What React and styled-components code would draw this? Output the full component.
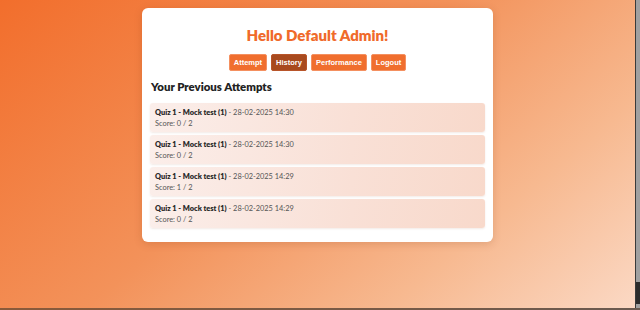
import React from "react";
import styled, { createGlobalStyle } from "styled-components";

const Global = createGlobalStyle`
  html, body { margin: 0; padding: 0; height: 100%; }
  body { font-family: "Lato", "Noto Sans", sans-serif; }
  #root { height: 100%; }
`;

const Page = styled.div`
  display: flex;
  flex-direction: column;
  height: 310px;
`;

const Viewport = styled.div`
  flex: 1;
  display: flex;
  background: linear-gradient(140deg, #f26e2c 0%, #f3925a 45%, #f7b990 75%, #fbd9c5 100%);
`;

const BottomEdge = styled.div`
  height: 2px;
  background: linear-gradient(90deg, #8a5a3a, #6a5a50);
`;

const Main = styled.main`
  flex: 1;
  display: flex;
  justify-content: center;
  align-items: flex-start;
  padding-top: 8px;
`;

const ScrollTrack = styled.div`
  width: 4px;
  border-left: 1px solid #3a3a3a;
  background: #a0a0a0;
  display: flex;
  flex-direction: column;
  justify-content: flex-end;
`;

const ScrollThumbEnd = styled.div`
  height: 22px;
  margin-bottom: 4px;
  background: #2c2c2c;
`;

const Card = styled.section`
  width: 351px;
  box-sizing: border-box;
  background: #fff;
  border-radius: 6px;
  padding: 18px 8px 14px;
  box-shadow: 0 2px 8px rgba(120, 50, 10, 0.18);
`;

const Title = styled.h1`
  margin: 0;
  text-align: center;
  color: #f06a2a;
  font-size: 15px;
  font-weight: 800;
  line-height: 18px;
`;

const Nav = styled.nav`
  display: flex;
  justify-content: center;
  gap: 4px;
  margin-top: 10px;
`;

const NavButton = styled.button`
  font-family: "Liberation Sans", Arial, sans-serif;
  font-weight: 700;
  font-size: 7.5px;
  color: #fff;
  height: 17px;
  padding: 0 4px;
  border: 1px solid ${(p) => (p.$active ? "#b8552a" : "#f49060")};
  border-radius: 2px;
  background: ${(p) => (p.$active ? "#a84a1e" : "#f06e2e")};
  cursor: pointer;
`;

const SubTitle = styled.h2`
  margin: 8px 0 0 1px;
  color: #222;
  font-size: 11.4px;
  font-weight: 800;
  line-height: 16px;
`;

const List = styled.ul`
  list-style: none;
  margin: 8px 0 0;
  padding: 0;
  display: flex;
  flex-direction: column;
  gap: 3px;
`;

const Item = styled.li`
  height: 29px;
  box-sizing: border-box;
  padding: 5px 5px;
  border-radius: 3px;
  background: linear-gradient(100deg, #fbeeea 0%, #f9e0d6 60%, #f8d9cb 100%);
  box-shadow: 0 1px 2px rgba(150, 80, 50, 0.12);
  font-size: 7.4px;
  line-height: 10.5px;
  color: #555;
`;

const Quiz = styled.strong`
  color: #2a2a2a;
  font-weight: 800;
`;

const attempts = [
  { date: "28-02-2025 14:30", score: "0 / 2" },
  { date: "28-02-2025 14:30", score: "0 / 2" },
  { date: "28-02-2025 14:29", score: "1 / 2" },
  { date: "28-02-2025 14:29", score: "0 / 2" },
];

export default function App() {
  return (
    <>
      <Global />
      <Page>
        <Viewport>
          <Main>
            <Card>
              <Title>Hello Default Admin!</Title>
              <Nav>
                <NavButton>Attempt</NavButton>
                <NavButton $active>History</NavButton>
                <NavButton>Performance</NavButton>
                <NavButton>Logout</NavButton>
              </Nav>
              <SubTitle>Your Previous Attempts</SubTitle>
              <List>
                {attempts.map((a, i) => (
                  <Item key={i}>
                    <div>
                      <Quiz>Quiz 1 - Mock test (1)</Quiz> - {a.date}
                    </div>
                    <div>Score: {a.score}</div>
                  </Item>
                ))}
              </List>
            </Card>
          </Main>
          <ScrollTrack>
            <ScrollThumbEnd />
          </ScrollTrack>
        </Viewport>
        <BottomEdge />
      </Page>
    </>
  );
}
